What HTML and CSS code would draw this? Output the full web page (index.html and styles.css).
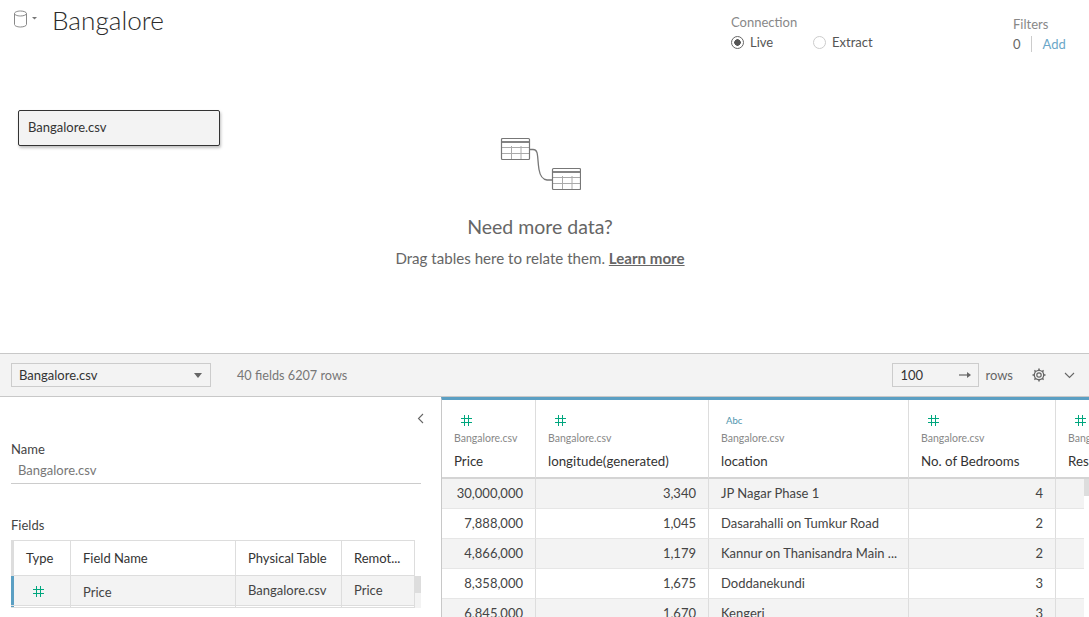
FILE: index.html
```html
<!DOCTYPE html>
<html lang="en">
<head>
    <meta charset="UTF-8">
    <title>Bangalore</title>
    <link rel="stylesheet" href="styles.css">
</head>
<body>

<div class="top">
    <div class="header">
        <svg class="dbIcon" width="24" height="18" viewBox="0 0 24 18">
            <path d="M.5 3.500v11c0 1.300 2.700 2.500 6 2.500s6-1.200 6-2.500v-11M.5 3.500C.5 2.200 3.200 1 6.500 1s6 1.200 6 2.500-2.700 2.500-6 2.500-6-1.200-6-2.500z" fill="none" stroke="#888" stroke-width="1"/>
            <path d="M18 7h5l-2.500 2.500z" fill="#777"/>
        </svg>
        <h1 class="title">Bangalore</h1>
        <div class="connection">
            <div class="label">Connection</div>
            <div class="radios">
                <span class="radio on"></span><span class="radioText">Live</span>
                <span class="radio"></span><span class="radioText">Extract</span>
            </div>
        </div>
        <div class="filters">
            <div class="label">Filters</div>
            <div class="filterRow"><span>0</span><a class="addLink">Add</a></div>
        </div>
    </div>

    <div class="tableCard">Bangalore.csv</div>

    <div class="needData">
        <svg width="82" height="56" viewBox="-1 0 82 56">
            <g fill="none" stroke="#aaa" stroke-width="1">
                <path d="M2 10.500h28M2 16.500h28M11.500 9v14M21 9v14"/>
                <path d="M53 40.500h28M53 46.500h28M62.500 39v14M72 39v14"/>
            </g>
            <g fill="none" stroke="#777">
                <rect x="1.500" y="1.500" width="28" height="21" rx="1" stroke-width="1.200"/>
                <path d="M2 5h27" stroke-width="1.800"/>
                <rect x="52.500" y="31.500" width="28" height="21" rx="1" stroke-width="1.200"/>
                <path d="M53 35h27" stroke-width="1.800"/>
                <path d="M30 12.500h3c6 0 4 8 6 20 1 6 4 10 8 10.500h5" stroke-width="1.300"/>
            </g>
        </svg>
        <h2 class="needTitle">Need more data?</h2>
        <p class="needText">Drag tables here to relate them. <a class="learnLink">Learn more</a></p>
    </div>
</div>

<div class="toolbar">
    <div class="tableSelect"><span>Bangalore.csv</span><span class="selectArrow"></span></div>
    <span class="counts">40 fields 6207 rows</span>
    <div class="spacer"></div>
    <div class="rowsInput"><span>100</span>
        <svg width="12" height="8" viewBox="0 0 12 8"><path d="M0 4h9" stroke="#666" stroke-width="1.200"/><path d="M8 1l4 3-4 3z" fill="#666"/></svg>
    </div>
    <span class="rowsLabel">rows</span>
    <svg class="gear" width="14" height="14" viewBox="0 0 14 14">
        <circle cx="7" cy="7" r="2.200" fill="none" stroke="#666" stroke-width="1.200"/>
        <circle cx="7" cy="7" r="4.700" fill="none" stroke="#666" stroke-width="1.300"/>
        <path d="M7 .5v2M7 11.500v2M.5 7h2M11.500 7h2M2.400 2.400l1.400 1.400M10.200 10.200l1.400 1.400M2.400 11.600l1.400-1.400M10.200 3.800l1.400-1.400" stroke="#666" stroke-width="1.500"/>
    </svg>
    <svg class="chevron" width="11" height="7" viewBox="0 0 11 7"><path d="M1 1l4.500 4.500L10 1" fill="none" stroke="#666" stroke-width="1.100"/></svg>
</div>

<div class="bottom">
    <div class="leftPanel">
        <div class="collapseRow">
            <svg width="7" height="11" viewBox="0 0 7 11"><path d="M6 1L1.500 5.500 6 10" fill="none" stroke="#666" stroke-width="1.100"/></svg>
        </div>
        <div class="panelLabel">Name</div>
        <div class="nameValue">Bangalore.csv</div>
        <div class="panelLabel fieldsLabel">Fields</div>
        <div class="fieldsWrap">
            <table class="fieldsTable">
                <colgroup><col class="fType"><col class="fName"><col class="fPhys"><col class="fRemote"></colgroup>
                <tr>
                    <th>Type</th><th>Field Name</th><th>Physical Table</th><th>Remot...</th>
                </tr>
                <tr class="selected">
                    <td>
                        <svg class="hash" width="11" height="11" viewBox="0 0 11 11"><path d="M3.500 0v11M7.500 0v11M0 3.500h11M0 7.500h11"/></svg>
                    </td>
                    <td class="nudge">Price</td><td>Bangalore.csv</td><td>Price</td>
                </tr>
                <tr class="nextRow"><td></td><td></td><td></td><td></td></tr>
            </table>
            <div class="fieldsScroll"><div class="thumb"></div></div>
        </div>
    </div>

    <div class="dataGrid">
        <table class="grid">
            <colgroup><col class="c1"><col class="c2"><col class="c3"><col class="c4"><col class="c5"></colgroup>
            <tr class="gridHead">
                <th><svg class="hash" width="11" height="11" viewBox="0 0 11 11"><path d="M3.500 0v11M7.500 0v11M0 3.500h11M0 7.500h11"/></svg><div class="source">Bangalore.csv</div><div class="colName">Price</div></th>
                <th><svg class="hash" width="11" height="11" viewBox="0 0 11 11"><path d="M3.500 0v11M7.500 0v11M0 3.500h11M0 7.500h11"/></svg><div class="source">Bangalore.csv</div><div class="colName">longitude(generated)</div></th>
                <th><span class="abc">Abc</span><div class="source">Bangalore.csv</div><div class="colName">location</div></th>
                <th><svg class="hash" width="11" height="11" viewBox="0 0 11 11"><path d="M3.500 0v11M7.500 0v11M0 3.500h11M0 7.500h11"/></svg><div class="source">Bangalore.csv</div><div class="colName">No. of Bedrooms</div></th>
                <th><svg class="hash" width="11" height="11" viewBox="0 0 11 11"><path d="M3.500 0v11M7.500 0v11M0 3.500h11M0 7.500h11"/></svg><div class="source">Bangalore.csv</div><div class="colName">Resale</div></th>
            </tr>
            <tr><td class="num">30,000,000</td><td class="num">3,340</td><td>JP Nagar Phase 1</td><td class="num">4</td><td></td></tr>
            <tr><td class="num">7,888,000</td><td class="num">1,045</td><td>Dasarahalli on Tumkur Road</td><td class="num">2</td><td></td></tr>
            <tr><td class="num">4,866,000</td><td class="num">1,179</td><td>Kannur on Thanisandra Main ...</td><td class="num">2</td><td></td></tr>
            <tr><td class="num">8,358,000</td><td class="num">1,675</td><td>Doddanekundi</td><td class="num">3</td><td></td></tr>
            <tr><td class="num">6,845,000</td><td class="num">1,670</td><td>Kengeri</td><td class="num">3</td><td></td></tr>
        </table>
        <div class="gridScroll"><div class="thumb"></div></div>
    </div>
</div>

</body>
</html>
```

FILE: styles.css
```css
html, body {
    margin: 0;
    height: 617px;
    overflow: hidden;
}
body {
    font-family: Lato, "Liberation Sans", sans-serif;
    font-size: 13px;
    color: #444;
    background: #fff;
}
h1, h2, p {
    margin: 0;
    font-weight: normal;
}

/* top canvas */
.top {
    position: relative;
    height: 353px;
}
.header {
    display: flex;
    height: 60px;
}
.dbIcon {
    margin: 10px 0 0 14px;
}
.title {
    margin: 3px 0 0 14px;
    font-size: 26.200px;
    font-weight: 300;
    line-height: 34px;
    color: #2b2b2b;
    width: 679px;
}
.label {
    color: #888;
    font-size: 13px;
    line-height: 16px;
}
.connection {
    width: 282px;
    padding-top: 14px;
}
.radios {
    display: flex;
    align-items: center;
    height: 20px;
    margin-top: 2px;
}
.radio {
    box-sizing: border-box;
    width: 13px;
    height: 13px;
    border: 1px solid #ccc;
    border-radius: 50%;
    margin-right: 6px;
}
.radio.on {
    border-color: #666;
    background: radial-gradient(circle, #555 0 3px, #fff 3.500px);
}
.radioText {
    width: 63px;
    color: #555;
}
.filters {
    padding-top: 16px;
}
.filterRow {
    display: flex;
    align-items: center;
    height: 20px;
    margin-top: 2px;
    color: #666;
}
.addLink {
    margin-left: 10px;
    padding-left: 11px;
    border-left: 1px solid #ccc;
    color: #6ba7c8;
}
.tableCard {
    position: absolute;
    left: 18px;
    top: 110px;
    box-sizing: border-box;
    width: 202px;
    height: 36px;
    padding-left: 9px;
    line-height: 33px;
    border: 1px solid #333;
    border-radius: 2px;
    background: #f3f3f3;
    box-shadow: 1px 2px 3px rgba(0, 0, 0, .25);
    color: #333;
}
.needData {
    text-align: center;
    padding-top: 77px;
    margin-right: 9px;
}
.needData svg {
    display: block;
    margin: 0 auto;
}
.needTitle {
    margin-top: 22px;
    font-size: 19.500px;
    line-height: 24px;
    color: #666;
}
.needText {
    margin-top: 8px;
    font-size: 15.100px;
    line-height: 22px;
    color: #666;
}
.learnLink {
    font-weight: bold;
    text-decoration: underline;
}

/* toolbar */
.toolbar {
    box-sizing: border-box;
    display: flex;
    align-items: center;
    height: 44px;
    padding: 0 0 0 11px;
    background: #f3f3f3;
    border-top: 1px solid #c8c8c8;
    border-bottom: 1px solid #c8c8c8;
}
.tableSelect {
    box-sizing: border-box;
    display: flex;
    justify-content: space-between;
    align-items: center;
    width: 200px;
    height: 24px;
    padding: 0 7px;
    border: 1px solid #ccc;
    color: #333;
}
.selectArrow {
    width: 0;
    height: 0;
    border-left: 4px solid transparent;
    border-right: 4px solid transparent;
    border-top: 5px solid #666;
    margin-right: 1px;
}
.counts {
    margin-left: 26px;
    color: #777;
    font-size: 12.700px;
}
.spacer {
    flex: 1;
}
.rowsInput {
    box-sizing: border-box;
    display: flex;
    justify-content: space-between;
    align-items: center;
    width: 87px;
    height: 24px;
    padding: 0 7px;
    border: 1px solid #ccc;
    color: #333;
}
.rowsLabel {
    margin-left: 6px;
    color: #666;
}
.gear {
    margin-left: 19px;
}
.chevron {
    margin: 0 14px 0 18px;
}

/* bottom panels */
.bottom {
    display: flex;
    height: 220px;
}
.leftPanel {
    width: 441px;
    padding-left: 11px;
    box-sizing: border-box;
    flex-shrink: 0;
}
.collapseRow {
    display: flex;
    justify-content: flex-end;
    width: 413px;
    height: 44px;
    padding-top: 16px;
    box-sizing: border-box;
}
.panelLabel {
    color: #444;
    line-height: 16px;
}
.nameValue {
    width: 403px;
    padding: 5px 0 5px 7px;
    line-height: 16px;
    color: #777;
    border-bottom: 1px solid #ccc;
}
.fieldsLabel {
    margin-top: 33px;
}
.fieldsWrap {
    display: flex;
    height: 68px;
    margin-top: 7px;
    overflow: hidden;
}
.fieldsTable {
    width: 404px;
    height: 68px;
    table-layout: fixed;
    border-collapse: separate;
    border-spacing: 0;
}
.fType { width: 60px; }
.fName { width: 165px; }
.fPhys { width: 106px; }
.fRemote { width: 73px; }
.fieldsTable th, .fieldsTable td {
    box-sizing: border-box;
    border-right: 1px solid #ddd;
    border-bottom: 1px solid #ddd;
    text-align: left;
    padding: 0 0 0 12px;
    font-weight: normal;
    color: #444;
    overflow: hidden;
    white-space: nowrap;
}
.fieldsTable th {
    height: 36px;
    color: #333;
    border-top: 1px solid #ddd;
}
.fieldsTable th:first-child {
    padding-left: 15px;
    box-shadow: inset 3px 0 0 #ddd;
}
.fieldsTable td {
    height: 30px;
    vertical-align: top;
    padding-top: 6px;
}
.fieldsTable td:first-child {
    padding: 10px 0 0 22px;
}
.fieldsTable td.nudge {
    padding-top: 8px;
}
.selected td {
    background: #f3f3f3;
}
.selected td:first-child {
    box-shadow: inset 3px 0 0 #5b9fc3;
}
.nextRow td {
    height: 2px;
    padding: 0 !important;
}
.nextRow td:first-child {
    box-shadow: inset 3px 0 0 #5b9fc3;
}
.fieldsScroll {
    width: 6px;
    margin-top: 36px;
    background: #f3f3f3;
}
.thumb {
    height: 17px;
    background: #ddd;
}
.hash {
    display: block;
    fill: none;
    stroke: #00a67e;
    stroke-width: 1;
}

/* data grid */
.dataGrid {
    position: relative;
    flex: 1;
    min-width: 0;
    overflow: hidden;
    border-left: 1px solid #c8c8c8;
    border-top: 3px solid #5b9fc3;
}
.grid {
    width: 647px;
    table-layout: fixed;
    border-collapse: separate;
    border-spacing: 0;
}
.c1 { width: 94px; }
.c2 { width: 173px; }
.c3 { width: 200px; }
.c4 { width: 147px; }
.c5 { width: 33px; }
.grid th, .grid td {
    border-right: 1px solid #ddd;
    padding: 0 12px;
    white-space: nowrap;
    overflow: hidden;
    font-weight: normal;
    text-align: left;
    color: #444;
}
.grid th {
    height: 79px;
    box-sizing: border-box;
    vertical-align: top;
    padding-top: 15px;
    border-bottom: 2px solid #d4d4d4;
    background: #fff;
}
.grid th:last-child, .grid td:last-child {
    border-right: 0;
}
.grid th .hash {
    margin-left: 7px;
}
.grid td {
    box-sizing: border-box;
    height: 30px;
    padding-bottom: 2px;
    border-bottom: 1px solid #e6e6e6;
}
.grid tr:nth-child(even) td {
    background: #f3f3f3;
}
.grid td.num {
    text-align: right;
}
.abc {
    display: block;
    height: 11px;
    margin-left: 5px;
    font-size: 9.500px;
    line-height: 11px;
    color: #4e95ad;
}
.source {
    margin-top: 6px;
    font-size: 10.500px;
    line-height: 13px;
    color: #888;
}
.colName {
    margin-top: 8px;
    line-height: 16px;
    font-size: 13.300px;
    color: #333;
}
.gridScroll {
    position: absolute;
    right: 0;
    top: 79px;
    bottom: 0;
    width: 5px;
    background: #fff;
}
```
